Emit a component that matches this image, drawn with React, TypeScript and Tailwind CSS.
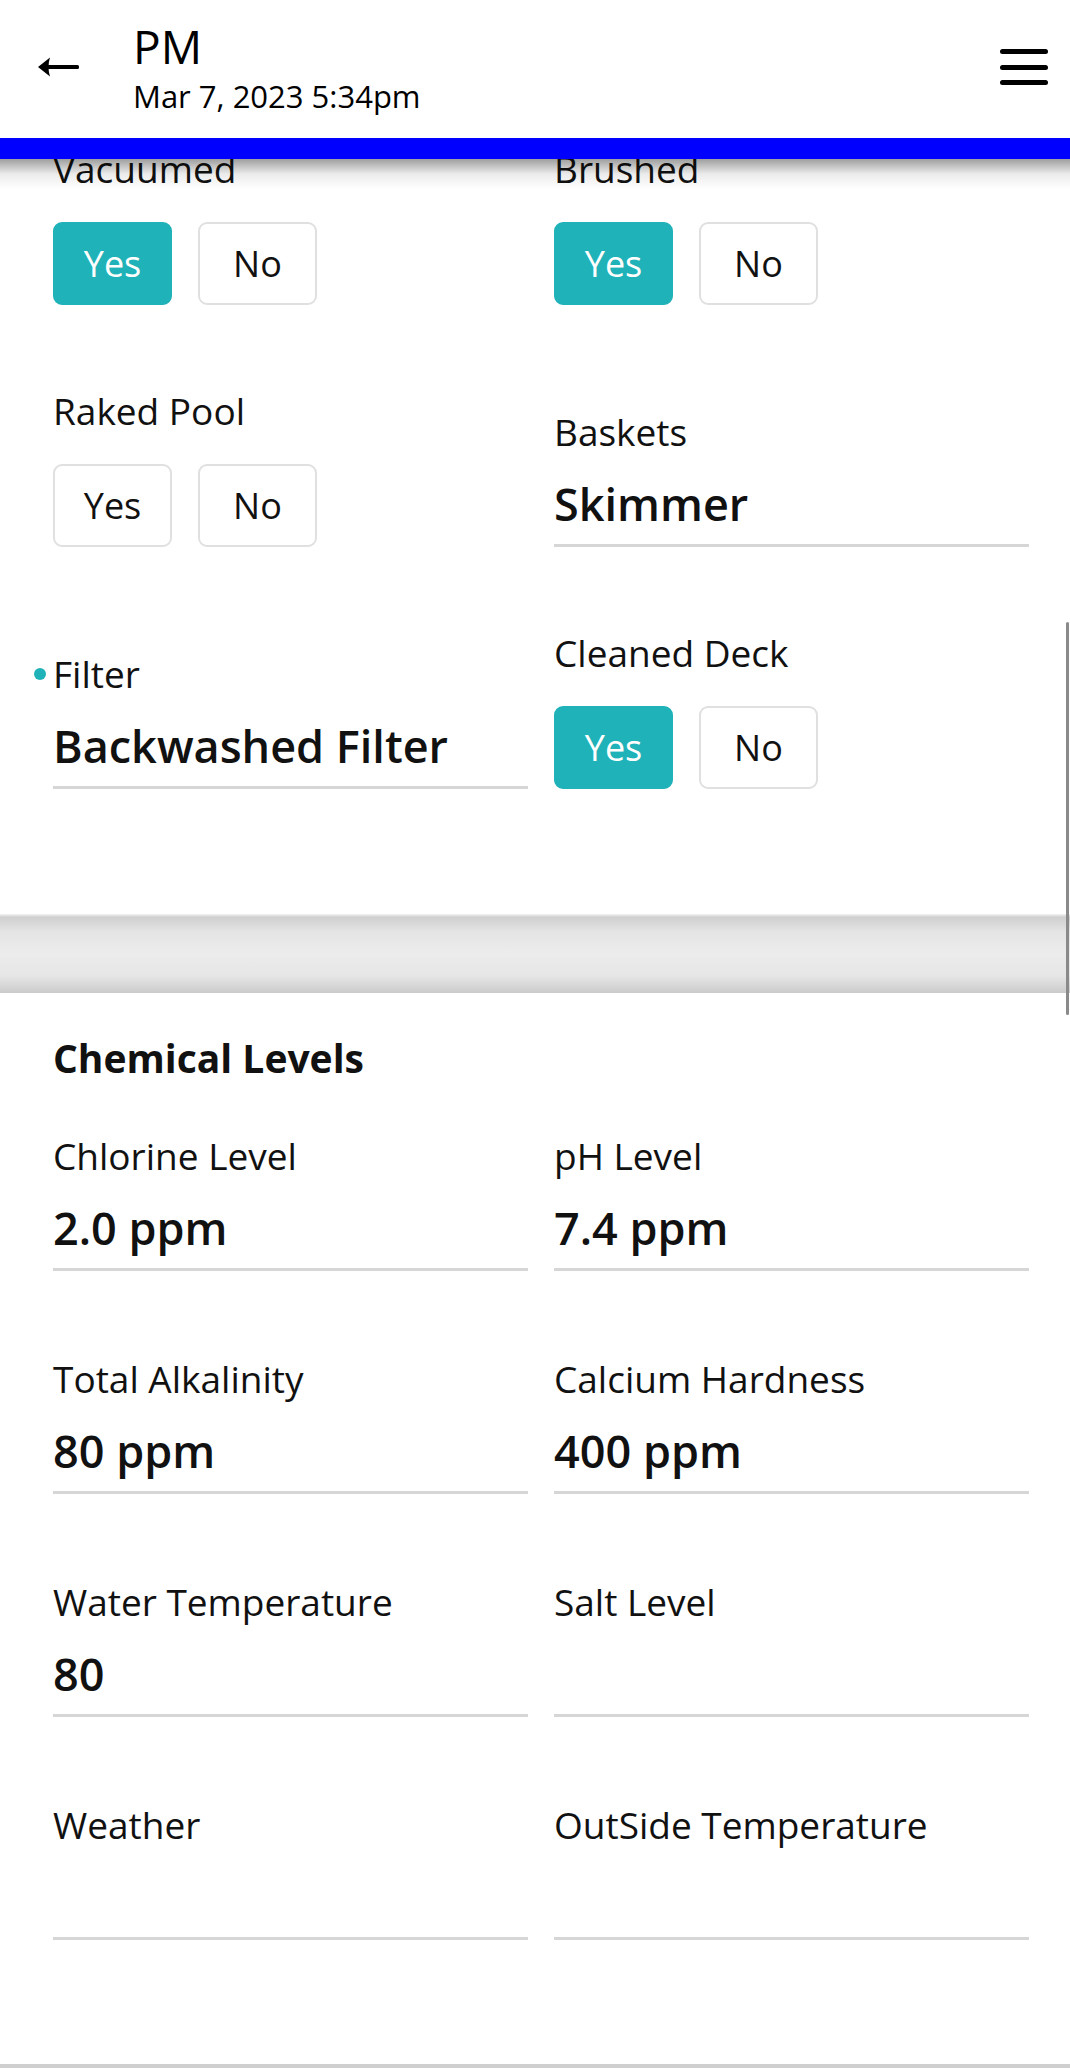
import React from "react"

type Choice = "yes" | "no" | null

const ToggleCell: React.FC<{ label: string; value: Choice }> = ({ label, value }) => (
  <div className="flex flex-col">
    <div className="h-[48px] text-[37px] leading-[48px] text-[#111]">{label}</div>
    <div className="mt-[29px] flex gap-[26px]">
      {(["yes", "no"] as const).map((opt) => {
        const active = value === opt
        return (
          <div
            key={opt}
            className={`flex h-[83px] w-[119px] items-center justify-center rounded-[9px] border-2 text-[36px] ${
              active ? "border-[#1fb2b8] bg-[#1fb2b8] text-white" : "border-[#e0e0e0] bg-white text-[#111]"
            }`}
          >
            {opt === "yes" ? "Yes" : "No"}
          </div>
        )
      })}
    </div>
  </div>
)

const TextCell: React.FC<{ label: string; value?: string; dot?: boolean }> = ({ label, value = "", dot }) => (
  <div className="flex flex-col border-b-[3px] border-[#d6d6d6] pb-[12px]">
    <div className="relative h-[48px] text-[37px] leading-[48px] text-[#111]">
      {dot && <span className="absolute left-[-19px] top-[18px] h-[12px] w-[12px] rounded-full bg-[#1fb2b8]" />}
      {label}
    </div>
    <div className="mt-[20px] h-[56px] text-[45px] font-semibold leading-[56px] text-[#111]">{value}</div>
  </div>
)

const ArrowLeft = () => (
  <svg width="41" height="22" viewBox="0 0 41 22" className="block">
    <path d="M0 11 L12 1.5 Q10.5 6 10.5 11 Q10.5 16 12 20.5 Z" fill="#000" />
    <rect x="9" y="9" width="32" height="4" rx="1.5" fill="#000" />
  </svg>
)

export default function App() {
  return (
    <div className="relative min-h-screen bg-[#e9e9e9] font-['Open_Sans',_'Noto_Sans',_sans-serif]">
      {/* top bar */}
      <header className="relative z-10 flex h-[138px] items-center bg-white pb-1 pl-[38px] pr-[22px]">
        <ArrowLeft />
        <div className="ml-[54px] flex flex-col">
          <div className="h-[56px] text-[46px] leading-[56px] text-black">PM</div>
          <div className="mt-[2px] h-[40px] text-[31px] leading-[40px] text-black">Mar 7, 2023 5:34pm</div>
        </div>
        <div className="ml-auto flex flex-col gap-[10.5px]">
          <span className="block h-[5px] w-[48px] rounded-full bg-black" />
          <span className="block h-[5px] w-[48px] rounded-full bg-black" />
          <span className="block h-[5px] w-[48px] rounded-full bg-black" />
        </div>
      </header>
      <div className="relative z-10 h-[21px] bg-[#0000ff]">
        <div className="pointer-events-none absolute left-0 right-0 top-full h-[30px] bg-gradient-to-b from-[rgba(0,0,0,0.38)] via-[rgba(0,0,0,0.08)] to-transparent" />
      </div>

      {/* service checklist card (scrolled) */}
      <section className="-mt-[14px] bg-white pb-[125px] pl-[53px] pr-[41px]">
        <div className="grid grid-cols-2 items-end gap-x-[26px] gap-y-[82px]">
          <ToggleCell label="Vacuumed" value="yes" />
          <ToggleCell label="Brushed" value="yes" />
          <ToggleCell label="Raked Pool" value={null} />
          <TextCell label="Baskets" value="Skimmer" />
          <TextCell label="Filter" value="Backwashed Filter" dot />
          <ToggleCell label="Cleaned Deck" value="yes" />
        </div>
      </section>

      <div className="h-[79px] bg-[linear-gradient(to_bottom,#f4f4f4_0%,#cfcfcf_4%,#e4e4e4_22%,#ececec_50%,#e6e6e6_78%,#cbcbcb_100%)]" />

      {/* chemical levels card */}
      <section className="bg-white pb-[124px] pl-[53px] pr-[41px] pt-[41px]">
        <h2 className="h-[48px] text-[39px] font-bold leading-[48px] text-[#111]">Chemical Levels</h2>
        <div className="mt-[50px] grid grid-cols-2 gap-x-[26px] gap-y-[84px]">
          <TextCell label="Chlorine Level" value="2.0 ppm" />
          <TextCell label="pH Level" value="7.4 ppm" />
          <TextCell label="Total Alkalinity" value="80 ppm" />
          <TextCell label="Calcium Hardness" value="400 ppm" />
          <TextCell label="Water Temperature" value="80" />
          <TextCell label="Salt Level" />
          <TextCell label="Weather" />
          <TextCell label="OutSide Temperature" />
        </div>
      </section>
      <div className="h-[4px] bg-[#cfcfcf]" />

      {/* scroll indicator */}
      <div className="pointer-events-none absolute right-[1px] top-[622px] h-[393px] w-[3px] rounded-full bg-[#8a8a8a]" />
    </div>
  )
}
